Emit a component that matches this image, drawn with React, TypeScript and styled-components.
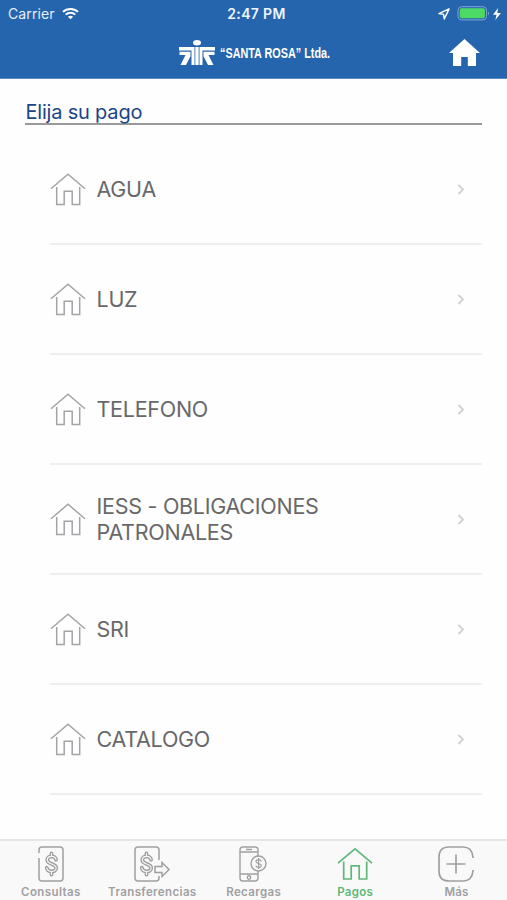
import React from "react";
import styled, { createGlobalStyle } from "styled-components";

const Global = createGlobalStyle`
  * { box-sizing: border-box; }
  body { margin: 0; background: #fefefe; font-family: Inter, "Liberation Sans", sans-serif; }
`;

const Screen = styled.div`
  width: 507px;
  height: 900px;
  display: flex;
  flex-direction: column;
  background: #fefefe;
  overflow: hidden;
`;

const Header = styled.header`
  height: 79px;
  flex: none;
  background: #2465ad;
  color: #fff;
  border-bottom: 1px solid #5a8cc4;
`;

const StatusBar = styled.div`
  height: 27px;
  display: grid;
  grid-template-columns: 1fr auto 1fr;
  align-items: center;
  padding: 0 6px 0 8px;
`;

const StatusGroup = styled.div<{ $end?: boolean }>`
  display: flex;
  align-items: center;
  justify-content: ${(p) => (p.$end ? "flex-end" : "flex-start")};
  gap: ${(p) => (p.$end ? 3 : 7)}px;
`;

const Carrier = styled.span`
  font-size: 14px;
  letter-spacing: 0.1px;
  color: #e4eefa;
`;

const Clock = styled.span`
  padding-left: 4px;
  font-size: 14px;
  font-weight: 600;
  letter-spacing: 0.35px;
  color: #eef5fd;
`;

const NavBar = styled.div`
  height: 51px;
  display: grid;
  grid-template-columns: 1fr auto 1fr;
  align-items: center;
  padding: 0 27px 0 26px;
`;

const Brand = styled.div`
  grid-column: 2;
  display: flex;
  align-items: center;
  gap: 5px;
  padding-left: 2px;
`;

const BrandName = styled.span`
  display: block;
  width: 110px;
  height: 18px;
  margin-top: -4px;
`;

const BrandText = styled.span`
  display: inline-block;
  font: bold 14.5px/18px "Liberation Sans", sans-serif;
  white-space: nowrap;
  transform: scaleX(0.747);
  transform-origin: left;
`;

const HomeLink = styled.a`
  justify-self: end;
  display: flex;
`;

const Main = styled.main`
  flex: 1;
  padding: 20px 25px 0;
`;

const Title = styled.h1`
  margin: 0;
  height: 26px;
  border-bottom: 2px solid #9a9a9c;
  padding-left: 0.5px;
  font-size: 20px;
  font-weight: 400;
  line-height: 26px;
  letter-spacing: -0.2px;
  color: #1b4589;
`;

const List = styled.ul`
  list-style: none;
  margin: 10px 0 0 25px;
  padding: 0;
`;

const Row = styled.li`
  height: 110px;
  display: flex;
  align-items: center;
  padding-right: 17px;
  border-bottom: 2px solid #efefef;
`;

const RowLabel = styled.span`
  flex: 1;
  margin-left: 10.5px;
  padding-right: 90px;
  font-size: 21.5px;
  line-height: 26px;
  letter-spacing: -0.27px;
  color: #68686a;
`;

const TabBar = styled.nav`
  height: 61px;
  flex: none;
  display: grid;
  grid-template-columns: repeat(5, 1fr);
  background: #f9f9f9;
  border-top: 2px solid #e6e6e6;
`;

const Tab = styled.a<{ $active?: boolean }>`
  display: flex;
  flex-direction: column;
  align-items: center;
  padding-top: 4.5px;
  color: ${(p) => (p.$active ? "#5fb87a" : "#a0a0a2")};
`;

const TabLabel = styled.span<{ $spacing: number }>`
  margin-top: 3px;
  padding-left: 0.5px;
  font-size: 11.5px;
  font-weight: 600;
  line-height: 15px;
  letter-spacing: ${(p) => p.$spacing}px;
  white-space: nowrap;
`;

const Icon = styled.svg`
  display: block;
  flex: none;
  overflow: visible;
  fill: none;
  stroke: currentColor;
`;

const RowIcon = styled(Icon)`
  color: #a3a4a7;
`;

const Chevron = styled(Icon)`
  color: #d0d0d2;
`;

const WifiIcon = () => (
  <Icon width="17" height="13" viewBox="0 0 18 13" strokeWidth="2.1">
    <path d="M1 4.800C5.500.6 12.500.6 17 4.800" />
    <path d="M3.900 7.700c2.900-2.700 7.300-2.700 10.200 0" />
    <path d="M9 12.500 6.200 9.900c1.600-1.400 4-1.400 5.600 0z" fill="#fff" stroke="none" />
  </Icon>
);

const LocationGlyph = styled(Icon)`
  margin-right: 4px;
`;

const LocationIcon = () => (
  <LocationGlyph width="12" height="12" viewBox="0 0 13 13" strokeWidth="1.600" strokeLinejoin="round">
    <path d="M12 1 1 6.100l5 .8.800 5z" />
  </LocationGlyph>
);

const BatteryIcon = () => (
  <Icon width="33" height="15" viewBox="0 0 33 15">
    <rect x="1" y=".7" width="28.500" height="13.200" rx="3.500" stroke="#7fa6d3" />
    <rect x="2.700" y="2.300" width="25.200" height="10" rx="1.800" fill="#4cd964" stroke="none" />
    <path d="M31 5.200q2 2 0 4.200z" fill="#7fa6d3" stroke="none" />
  </Icon>
);

const BoltIcon = () => (
  <Icon width="8" height="12" viewBox="0 0 8 12">
    <path d="M5 0 0 6.700h3.500L2.300 12 8 4.900H4.300z" fill="#fff" stroke="none" />
  </Icon>
);

const BrandMark = () => (
  <Icon width="36" height="25" viewBox="0 0 36 25">
    <g fill="#fff" stroke="none">
      <ellipse cx="18" cy="2.700" rx="4" ry="2.700" />
      <path d="M0 7h15.500v18h-3V10.500H0zM36 7H20.500v18h3V10.500H36z" />
      <path d="M.5 11.700h11v4.500L7 25H1.500L6.500 15H.5zM35.500 11.700h-11v4.500L29 25h5.500L29.500 15h6z" />
      <path d="M16.300 7h3.400v18h-3.400z" />
    </g>
  </Icon>
);

const SolidHome = () => (
  <Icon width="31" height="27" viewBox="0 0 31 27">
    <path d="M15.500 0 0 14h4v13h8.200v-9h6.600v9H27V14h4l-5-4.500z" fill="#fff" stroke="none" />
  </Icon>
);

const houseShape = (
  <>
    <path d="M1 15.700 18 1.300l17 14.400" />
    <path d="M6.700 14v17.500h7.500V18.300h8v13.200h7.500V14" />
  </>
);

const DOLLAR = "M5.500.5v3M5.500 18.500v3M10 6.800C9.500 2.200 1.300 2.300 1.300 7c0 4.600 8.900 3.200 8.900 8 0 4.600-8.700 4.600-9.400-.2";

const DollarOutline = ({ x }: { x: number }) => (
  <g transform={`translate(${x} 7)`} strokeLinecap="round">
    <path d={DOLLAR} strokeWidth="3.900" />
    <path d={DOLLAR} stroke="#f9f9f9" strokeWidth="1.100" />
  </g>
);

const ConsultasIcon = () => (
  <Icon width="26" height="36" viewBox="0 0 26 36" strokeWidth="1.500">
    <path d="M1 7V4q0-3 3-3h18q3 0 3 3v28q0 3-3 3H4q-3 0-3-3V12" />
    <DollarOutline x={8} />
  </Icon>
);

const TransferenciasIcon = () => (
  <Icon width="36" height="36" viewBox="0 0 36 36" strokeWidth="1.500">
    <path d="M25 14V4q0-3-3-3H4Q1 1 1 4v28q0 3 3 3h18q3 0 3-3v-2" />
    <DollarOutline x={7} />
    <path d="M21 20.500h7v-4l7 7-7 7v-4h-7z" fill="#f9f9f9" />
  </Icon>
);

const RecargasIcon = () => (
  <Icon width="28" height="36" viewBox="0 0 28 36" strokeWidth="1.400">
    <path d="M19 10V4q0-3-3-3H4Q1 1 1 4v28q0 3 3 3h12q3 0 3-3v-7M1 6h18M1 28h18M7 3.500h6" />
    <circle cx="10" cy="31.500" r="1.700" />
    <circle cx="19.500" cy="17.500" r="7.500" />
    <path d="M22.200 15.500c-.5-2.500-5.200-2.300-5.200.1 0 2.800 5.300 1.200 5.300 4 0 2.600-5 2.500-5.500 0M19.600 12v11" strokeWidth="1.200" />
  </Icon>
);

const PagosIcon = () => (
  <Icon width="36" height="36" viewBox="0 -1.500 36 36" strokeWidth="1.700">{houseShape}</Icon>
);

const MasIcon = () => (
  <Icon width="36" height="36" viewBox="0 0 36 36" strokeWidth="1.700">
    <path d="M35 12v-1Q34 1 25 1H11Q1 1 1 11v14q0 10 10 10h14q9 0 10-10v-1" />
    <path d="M18 8.500v19M8.500 18h19" />
  </Icon>
);

const payments = ["AGUA", "LUZ", "TELEFONO", "IESS - OBLIGACIONES PATRONALES", "SRI", "CATALOGO"];

const tabs = [
  { label: "Consultas", spacing: 0.4, Glyph: ConsultasIcon },
  { label: "Transferencias", spacing: 0.38, Glyph: TransferenciasIcon },
  { label: "Recargas", spacing: 0.4, Glyph: RecargasIcon },
  { label: "Pagos", spacing: 0.25, Glyph: PagosIcon, active: true },
  { label: "Más", spacing: 0.2, Glyph: MasIcon },
];

export default function App() {
  return (
    <Screen>
      <Global />
      <Header>
        <StatusBar>
          <StatusGroup><Carrier>Carrier</Carrier><WifiIcon /></StatusGroup>
          <Clock>2:47 PM</Clock>
          <StatusGroup $end><LocationIcon /><BatteryIcon /><BoltIcon /></StatusGroup>
        </StatusBar>
        <NavBar>
          <Brand>
            <BrandMark />
            <BrandName><BrandText>“SANTA ROSA” Ltda.</BrandText></BrandName>
          </Brand>
          <HomeLink><SolidHome /></HomeLink>
        </NavBar>
      </Header>
      <Main>
        <Title>Elija su pago</Title>
        <List>
          {payments.map((name) => (
            <Row key={name}>
              <RowIcon width="36" height="33" viewBox="0 0 36 33" strokeWidth="1.500">{houseShape}</RowIcon>
              <RowLabel>{name}</RowLabel>
              <Chevron width="8" height="11" viewBox="0 0 8 11" strokeWidth="1.800"><path d="m1.500 1 4.500 4.500L1.500 10" /></Chevron>
            </Row>
          ))}
        </List>
      </Main>
      <TabBar>
        {tabs.map(({ label, spacing, Glyph, active }) => (
          <Tab key={label} $active={active}>
            <Glyph />
            <TabLabel $spacing={spacing}>{label}</TabLabel>
          </Tab>
        ))}
      </TabBar>
    </Screen>
  );
}
